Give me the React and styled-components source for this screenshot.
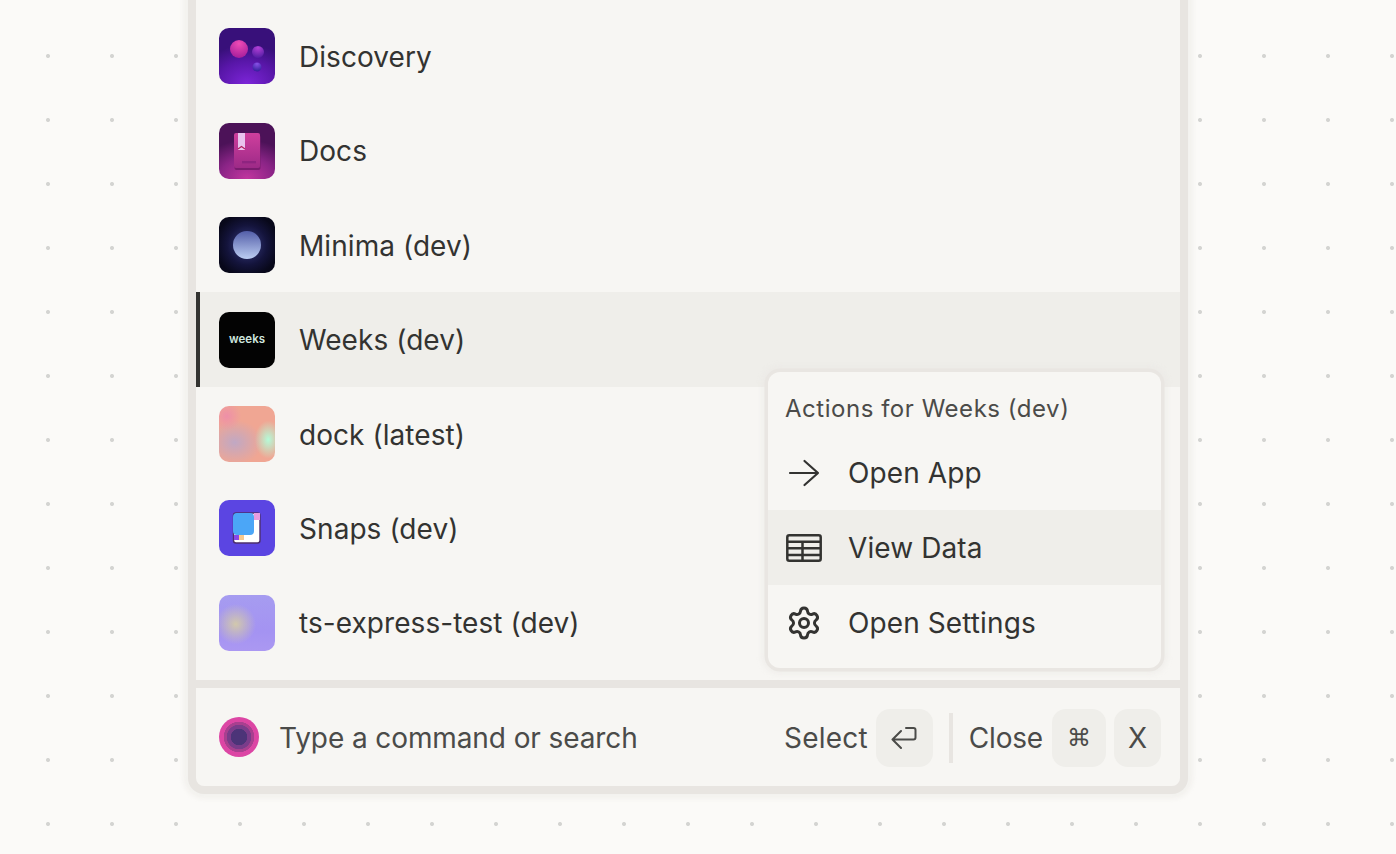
import React from 'react';
import styled, { createGlobalStyle } from 'styled-components';
import { Settings } from 'lucide-react';

const GlobalStyle = createGlobalStyle`
  html, body {
    margin: 0;
    height: 100%;
    overflow: hidden;
  }

  body {
    background-color: #fbfaf8;
    background-image: radial-gradient(circle at center, #d2d2d0 0, #d6d6d4 1.6px, transparent 2.4px);
    background-size: 64px 64px;
    background-position: 16px 24px;
    font-family: Inter, "Liberation Sans", sans-serif;
    color: #333331;
  }
`;

const Page = styled.main`
  height: 854px;
  padding: 0 208px 60px 188px;
  box-sizing: border-box;
  display: flex;
  flex-direction: column;
  overflow: hidden;
`;

const Panel = styled.section`
  position: relative;
  flex: 1;
  display: flex;
  flex-direction: column;
  background: #f7f6f3;
  border: 8px solid #e8e5e1;
  border-top: 0;
  border-radius: 0 0 16px 16px;
  box-shadow: 0 0 4px 5px rgba(232, 229, 225, 0.4);
`;

const List = styled.ul`
  flex: 1;
  display: flex;
  flex-direction: column;
  justify-content: flex-end;
  list-style: none;
  margin: 0;
  padding: 0 0 10px;
  border-bottom: 8px solid #e8e5e1;
`;

const Row = styled.li`
  display: flex;
  align-items: center;
  gap: 24px;
  height: 94.4px;
  box-sizing: border-box;
  padding-left: ${(props) => (props.$active ? '19px' : '23px')};
  background: ${(props) => (props.$active ? '#efeeea' : 'transparent')};
  border-left: ${(props) => (props.$active ? '4px solid #333331' : '0')};
  font-size: 28px;
  line-height: 34px;
  letter-spacing: 0.06px;
`;

const RowLabel = styled.span`
  padding-top: 1px;
`;

const AppIcon = styled.span`
  flex: none;
  display: flex;
  align-items: center;
  justify-content: center;
  width: 56px;
  height: 56px;
  border-radius: 10px;
  overflow: hidden;
  background: ${(props) => props.$bg};
  svg {
    display: block;
  }
`;

const WeeksMark = styled.span`
  color: #cfe6df;
  font-size: 11.5px;
  font-weight: 600;
  line-height: 1;
  padding-top: 1px;
`;

const Menu = styled.div`
  position: absolute;
  top: 372px;
  right: 19px;
  width: 393px;
  height: 296px;
  box-sizing: border-box;
  background: #f7f6f3;
  border-radius: 12px;
  overflow: hidden;
  box-shadow: 0 0 0 3.5px #e9e6e2, 0 0 4px 7px rgba(232, 229, 225, 0.35);
`;

const MenuTitle = styled.div`
  height: 63px;
  padding: 22px 0 0 17px;
  box-sizing: border-box;
  font-size: 24px;
  line-height: 29px;
  letter-spacing: 0.53px;
  color: #4b4b49;
`;

const MenuItem = styled.div`
  display: flex;
  align-items: center;
  height: 75px;
  padding-left: 18px;
  gap: 26px;
  font-size: 28px;
  letter-spacing: 0.1px;
  background: ${(props) => (props.$active ? '#efeeea' : 'transparent')};
`;

const MenuGlyph = styled.span`
  display: flex;
  align-items: center;
  justify-content: center;
  width: 36px;
  height: 36px;
  flex: none;
  color: #333331;
`;

const Footer = styled.footer`
  display: flex;
  align-items: center;
  height: 98px;
  box-sizing: border-box;
  padding: 2px 19px 0 23px;
  color: #4b4b49;
  font-size: 28px;
`;

const Orb = styled.span`
  flex: none;
  width: 40px;
  height: 40px;
  border-radius: 50%;
  margin: -2px 20px 0 0;
  background: radial-gradient(circle, #4c3478 0 8px, #7a3c8a 8.5px 12px, #a8408f 12.5px 15px, #dc46a4 15.5px);
`;

const Search = styled.span`
  flex: 1;
  letter-spacing: -0.1px;
`;

const Hint = styled.span`
  letter-spacing: ${(props) => props.$spacing}px;
  margin-right: ${(props) => props.$gap}px;
`;

const Key = styled.kbd`
  display: flex;
  align-items: center;
  justify-content: center;
  width: ${(props) => props.$width}px;
  height: 58px;
  margin-right: ${(props) => props.$gap || 0}px;
  border-radius: 14px;
  background: #efeeea;
  font-family: inherit;
  font-size: 28px;
  color: #4b4b49;
`;

const CmdGlyph = styled.span`
  font-family: "DejaVu Sans", sans-serif;
  font-size: 24px;
`;

const Separator = styled.span`
  width: 4px;
  height: 50px;
  margin: 0 16px;
  background: #e8e5e1;
`;

const DiscoveryIcon = () => (
  <svg width="56" height="56" viewBox="0 0 56 56">
    <defs>
      <radialGradient id="disc-a" cx="0.5" cy="0.2" r="0.85">
        <stop offset="0" stopColor="#ef4bb5" />
        <stop offset="1" stopColor="#a21c9a" />
      </radialGradient>
      <radialGradient id="disc-b" cx="0.5" cy="0.15" r="0.9">
        <stop offset="0" stopColor="#b33fd6" />
        <stop offset="1" stopColor="#4d1ba0" />
      </radialGradient>
      <radialGradient id="disc-c" cx="0.5" cy="0.15" r="0.9">
        <stop offset="0" stopColor="#8a50e8" />
        <stop offset="1" stopColor="#2d1c96" />
      </radialGradient>
    </defs>
    <circle cx="20" cy="21" r="9" fill="url(#disc-a)" />
    <circle cx="39" cy="24" r="6" fill="url(#disc-b)" />
    <circle cx="38" cy="39" r="4.5" fill="url(#disc-c)" />
  </svg>
);

const DocsIcon = () => (
  <svg width="56" height="56" viewBox="0 0 56 56">
    <defs>
      <linearGradient id="docs-a" x1="0" y1="0" x2="0" y2="1">
        <stop offset="0" stopColor="#cf3f9d" />
        <stop offset="1" stopColor="#9d2a87" />
      </linearGradient>
    </defs>
    <rect x="15.5" y="12" width="26" height="35" rx="2" fill="#7a1c6e" />
    <rect x="15" y="10" width="26" height="35" rx="2" fill="url(#docs-a)" />
    <rect x="19" y="10" width="7" height="17" fill="#e9c3ee" />
    <path d="M19 26 L22.5 23.5 L26 26" fill="none" stroke="#b51f5f" strokeWidth="1.2" />
    <rect x="23" y="38" width="14" height="2.4" fill="#8e2480" />
  </svg>
);

const MinimaIcon = () => (
  <svg width="56" height="56" viewBox="0 0 56 56">
    <defs>
      <linearGradient id="min-a" x1="0" y1="0" x2="0" y2="1">
        <stop offset="0" stopColor="#535ea8" />
        <stop offset="1" stopColor="#bccdf2" />
      </linearGradient>
    </defs>
    <circle cx="28" cy="28" r="14" fill="url(#min-a)" />
  </svg>
);

const SnapsIcon = () => (
  <svg width="56" height="56" viewBox="0 0 56 56">
    <rect x="14.5" y="13" width="26.5" height="30" rx="2.5" fill="#fff" stroke="#4c2f6e" strokeWidth="1.4" />
    <rect x="35" y="13" width="6" height="7" fill="#e79ce0" />
    <rect x="15" y="35" width="5" height="5" fill="#8b46e8" />
    <rect x="20" y="35" width="5" height="5" fill="#f9c98e" />
    <rect x="14" y="13" width="21" height="22" rx="4" fill="#4ba6f7" />
  </svg>
);

const OpenIcon = () => (
  <svg width="36" height="36" viewBox="0 0 36 36" fill="none" stroke="#333331" strokeWidth="2.2" strokeLinecap="round" strokeLinejoin="round">
    <path d="M4 18H32M18.5 6L32 18L18.5 30" />
  </svg>
);

const TableIcon = () => (
  <svg width="36" height="28" viewBox="0 0 36 28" fill="none" stroke="#333331" strokeWidth="2.5">
    <rect x="1.3" y="1.3" width="33.4" height="25.4" rx="2" />
    <path d="M1.3 7.7H34.7M1.3 14.3H34.7M1.3 21H34.7M16.5 7.7V26.7" />
  </svg>
);

const ReturnIcon = () => (
  <svg width="26" height="22" viewBox="0 0 26 22" fill="none" stroke="#4b4b49" strokeWidth="2" strokeLinecap="round" strokeLinejoin="round">
    <path d="M10 4L1.5 12.5L10 21M1.5 12.5H22.5a2 2 0 0 0 2-2V3a2 2 0 0 0-2-2H15" />
  </svg>
);

const apps = [
  { name: 'Discovery', bg: 'radial-gradient(90% 70% at 50% 100%, #7c25d8, #5816a8 60%, #38107a)', icon: <DiscoveryIcon /> },
  { name: 'Docs', bg: 'radial-gradient(90% 70% at 50% 100%, #c2359f, #8a2486 55%, #4c1258)', icon: <DocsIcon /> },
  { name: 'Minima (dev)', bg: 'radial-gradient(circle, #3a3f86 0, #14143c 50%, #08081a 80%)', icon: <MinimaIcon /> },
  { name: 'Weeks (dev)', bg: '#030303', icon: <WeeksMark>weeks</WeeksMark>, active: true },
  {
    name: 'dock (latest)',
    bg: 'radial-gradient(24% 34% at 88% 60%, #b4fbd8 0, transparent 100%), radial-gradient(26% 26% at 14% 18%, #ee8fa8 0, transparent 100%), radial-gradient(50% 40% at 28% 65%, #c0a8c4 0, transparent 100%), #f0a693',
  },
  { name: 'Snaps (dev)', bg: '#5b45e2', icon: <SnapsIcon /> },
  {
    name: 'ts-express-test (dev)',
    bg: 'radial-gradient(36% 36% at 30% 52%, #d2c8ac 0, transparent 100%), linear-gradient(180deg, #a69cf0 0, #a493f2 65%, #ab98f2 100%)',
  },
];

const App = () => (
  <>
    <GlobalStyle />
    <Page>
      <Panel>
        <List>
          {apps.map((app) => (
            <Row key={app.name} $active={app.active}>
              <AppIcon $bg={app.bg}>{app.icon}</AppIcon>
              <RowLabel>{app.name}</RowLabel>
            </Row>
          ))}
        </List>
        <Footer>
          <Orb />
          <Search>Type a command or search</Search>
          <Hint $gap={8} $spacing={0.2}>Select</Hint>
          <Key $width={57}>
            <ReturnIcon />
          </Key>
          <Separator />
          <Hint $gap={9} $spacing={-0.2}>Close</Hint>
          <Key $width={54} $gap={8}>
            <CmdGlyph>⌘</CmdGlyph>
          </Key>
          <Key $width={47}>X</Key>
        </Footer>
        <Menu>
          <MenuTitle>Actions for Weeks (dev)</MenuTitle>
          <MenuItem>
            <MenuGlyph>
              <OpenIcon />
            </MenuGlyph>
            Open App
          </MenuItem>
          <MenuItem $active>
            <MenuGlyph>
              <TableIcon />
            </MenuGlyph>
            View Data
          </MenuItem>
          <MenuItem>
            <MenuGlyph>
              <Settings size={36} strokeWidth={2} />
            </MenuGlyph>
            Open Settings
          </MenuItem>
        </Menu>
      </Panel>
    </Page>
  </>
);

export default App;
